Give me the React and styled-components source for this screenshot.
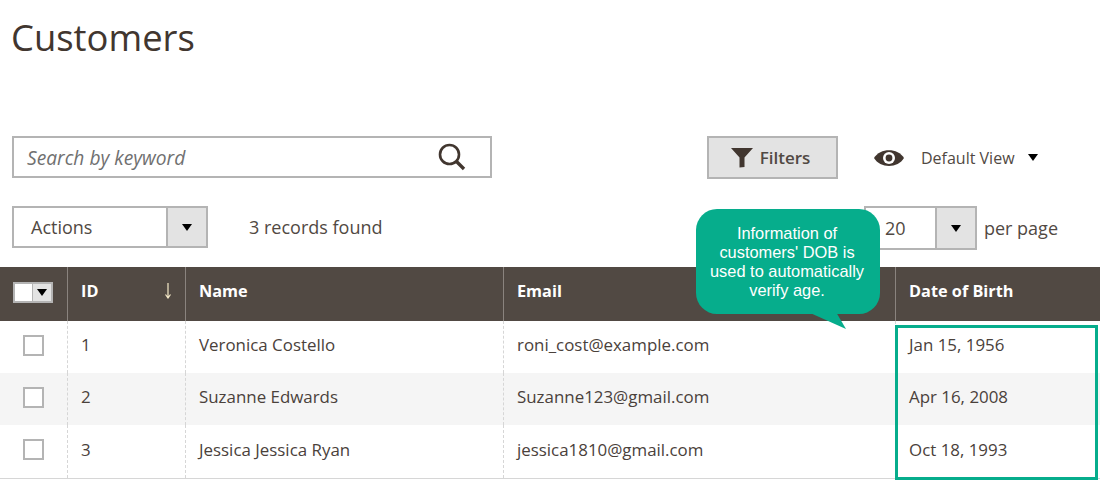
import React from 'react';
import styled, { createGlobalStyle } from 'styled-components';

const GlobalStyle = createGlobalStyle`
  html, body {
    margin: 0;
    padding: 0;
    background: #fff;
  }
  body {
    font-family: "Open Sans", "Noto Sans", sans-serif;
    color: #41362f;
    overflow: hidden;
  }
`;

const Page = styled.div`
  position: relative;
  width: 1100px;
  height: 489px;
  overflow: hidden;
`;

const Title = styled.h1`
  margin: 0;
  padding: 14px 0 0 11px;
  height: 136px;
  box-sizing: border-box;
  font-size: 36.4px;
  line-height: 46px;
  font-weight: 400;
  color: #41362f;
`;

const Toolbar = styled.div`
  display: flex;
  align-items: flex-start;
  padding-left: 12px;
`;

const SearchBox = styled.div`
  width: 480px;
  height: 42px;
  box-sizing: border-box;
  border: 2px solid #b4b4b4;
  display: flex;
  align-items: center;
  justify-content: space-between;
  padding: 0 24px 0 13px;
  font-size: 19.2px;
  font-style: italic;
  color: #707070;
`;

const FilterButton = styled.div`
  margin-left: 215px;
  width: 131px;
  height: 43px;
  box-sizing: border-box;
  border: 2px solid #b4b4b4;
  background: #e3e3e3;
  display: flex;
  align-items: center;
  justify-content: center;
  gap: 7px;
  padding-right: 4px;
  font-size: 17px;
  font-weight: 600;
  color: #514943;
`;

const ViewSwitch = styled.div`
  margin-left: 36px;
  height: 43px;
  display: flex;
  align-items: center;
  font-size: 16px;
  color: #514943;
`;

const ViewLabel = styled.span`
  margin: 0 13px 0 17px;
`;

const ActionsRow = styled(Toolbar)`
  margin-top: 27px;
  height: 44px;
`;

const Select = styled.div`
  width: ${(p) => p.$width}px;
  height: ${(p) => p.$height}px;
  box-sizing: border-box;
  border: 2px solid #b4b4b4;
  display: flex;
  align-items: stretch;
  font-size: 18px;
  color: #514943;
`;

const SelectValue = styled.div`
  flex: 1;
  display: flex;
  align-items: center;
  padding-left: ${(p) => p.$indent}px;
  border-right: 2px solid #b4b4b4;
`;

const SelectArrow = styled.div`
  width: 38px;
  background: #e3e3e3;
  display: flex;
  align-items: center;
  justify-content: center;
`;

const Caret = styled.span`
  display: block;
  width: 0;
  height: 0;
  border-left: 5.5px solid transparent;
  border-right: 5.5px solid transparent;
  border-top: 7px solid #000;
`;

const Records = styled.div`
  margin-left: 41px;
  height: 42px;
  display: flex;
  align-items: center;
  font-size: 18px;
  color: #514943;
`;

const PerPage = styled.div`
  margin-left: auto;
  margin-right: 42px;
  display: flex;
  align-items: center;
  gap: 7px;
  font-size: 18px;
  color: #514943;
`;

const Table = styled.div`
  margin-top: 17px;
  display: grid;
  grid-template-columns: 67px 118px 318px 392px 205px;
  border-bottom: 1px solid #d6d6d6;
`;

const HeadCell = styled.div`
  height: 54px;
  box-sizing: border-box;
  background: #514943;
  border-left: 1px solid ${(p) => (p.$first ? '#514943' : '#8a837e')};
  padding: 0 12px 6px 13px;
  display: flex;
  align-items: center;
  justify-content: space-between;
  font-size: 16.3px;
  font-weight: 700;
  color: #fff;
`;

const Cell = styled.div`
  height: ${(p) => (p.$tall ? 53 : 52)}px;
  box-sizing: border-box;
  background: ${(p) => (p.$shaded ? '#f5f5f5' : '#fff')};
  border-left: ${(p) => (p.$first ? 'none' : '1px dashed #d6d6d6')};
  padding: 0 13px ${(p) => (p.$tall ? 5 : 6)}px;
  display: flex;
  align-items: center;
  font-size: 16.9px;
  color: #4a413b;
`;

const CheckCell = styled(Cell)`
  justify-content: center;
  padding: 0 0 4px;
`;

const Checkbox = styled.span`
  display: block;
  width: 21px;
  height: 21px;
  box-sizing: border-box;
  border: 2px solid #b4b4b4;
  background: #fff;
`;

const MassSelect = styled.div`
  width: 40px;
  height: 21px;
  margin: 2px 0 0 -1px;
  box-sizing: border-box;
  border: 2px solid #b4b4b4;
  display: flex;
  flex-shrink: 0;
`;

const MassBox = styled.span`
  flex: 1;
  background: #fff;
`;

const MassArrow = styled.span`
  width: 18px;
  background: #e3e3e3;
  border-left: 1px solid #b4b4b4;
  display: flex;
  align-items: center;
  justify-content: center;
`;

const Highlight = styled.div`
  position: absolute;
  left: 895px;
  top: 325px;
  width: 203px;
  height: 155px;
  box-sizing: border-box;
  border: 3px solid #06ad8c;
`;

const Callout = styled.div`
  position: absolute;
  left: 696px;
  top: 209px;
  width: 184px;
  height: 105px;
  box-sizing: border-box;
  padding: 15px 2px 0 0;
  border-radius: 21px;
  background: #06ad8c;
  color: #fff;
  font-family: "Liberation Sans", Arial, sans-serif;
  font-size: 16.4px;
  line-height: 19px;
  text-align: center;
`;

const CalloutTail = styled.svg`
  position: absolute;
  left: 112px;
  top: 103px;
`;

const SearchIcon = () => (
  <svg width="28" height="28" viewBox="0 0 28 28" fill="none" stroke="#41362f">
    <circle cx="11.5" cy="11.5" r="9.5" strokeWidth="2.6" />
    <path d="M18.5 18.5 L26 26" strokeWidth="3.4" />
  </svg>
);

const FunnelIcon = () => (
  <svg width="22" height="20" viewBox="0 0 22 20" fill="#41362f">
    <path d="M0 0 H22 L13.5 9.5 V19 L8.5 19.5 V9.5 Z" />
  </svg>
);

const EyeIcon = () => (
  <svg width="30" height="18" viewBox="0 0 30 18">
    <path d="M0 9 C6 -1.5 24 -1.5 30 9 C24 19.5 6 19.5 0 9 Z" fill="#41362f" />
    <circle cx="15" cy="9" r="6" fill="#fff" />
    <circle cx="15" cy="9" r="3.4" fill="#41362f" />
  </svg>
);

const SortArrow = () => (
  <svg width="10" height="16" viewBox="0 0 10 16" fill="none" stroke="#f5e9c8" strokeWidth="1.2">
    <path d="M5 0 V14 M2.5 11.5 L5 15 L7.5 11.5" />
  </svg>
);

const customers = [
  { id: 1, name: 'Veronica Costello', email: 'roni_cost@example.com', dob: 'Jan 15, 1956' },
  { id: 2, name: 'Suzanne Edwards', email: 'Suzanne123@gmail.com', dob: 'Apr 16, 2008' },
  { id: 3, name: 'Jessica Jessica Ryan', email: 'jessica1810@gmail.com', dob: 'Oct 18, 1993' },
];

const App = () => (
  <Page>
    <GlobalStyle />
    <Title>Customers</Title>

    <Toolbar>
      <SearchBox>
        Search by keyword
        <SearchIcon />
      </SearchBox>
      <FilterButton>
        <FunnelIcon />
        Filters
      </FilterButton>
      <ViewSwitch>
        <EyeIcon />
        <ViewLabel>Default View</ViewLabel>
        <Caret />
      </ViewSwitch>
    </Toolbar>

    <ActionsRow>
      <Select $width={196} $height={42}>
        <SelectValue $indent={17}>Actions</SelectValue>
        <SelectArrow>
          <Caret />
        </SelectArrow>
      </Select>
      <Records>3 records found</Records>
      <PerPage>
        <Select $width={113} $height={44}>
          <SelectValue $indent={19}>20</SelectValue>
          <SelectArrow>
            <Caret />
          </SelectArrow>
        </Select>
        per page
      </PerPage>
    </ActionsRow>

    <Table>
      <HeadCell $first>
        <MassSelect>
          <MassBox />
          <MassArrow>
            <Caret />
          </MassArrow>
        </MassSelect>
      </HeadCell>
      <HeadCell>
        ID
        <SortArrow />
      </HeadCell>
      <HeadCell>Name</HeadCell>
      <HeadCell>Email</HeadCell>
      <HeadCell>Date of Birth</HeadCell>

      {customers.map((c, i) => {
        const shaded = i === 1;
        const tall = i === 2;
        return (
          <React.Fragment key={c.id}>
            <CheckCell $first $shaded={shaded} $tall={tall}>
              <Checkbox />
            </CheckCell>
            <Cell $shaded={shaded} $tall={tall}>{c.id}</Cell>
            <Cell $shaded={shaded} $tall={tall}>{c.name}</Cell>
            <Cell $shaded={shaded} $tall={tall}>{c.email}</Cell>
            <Cell $shaded={shaded} $tall={tall}>{c.dob}</Cell>
          </React.Fragment>
        );
      })}
    </Table>

    <Highlight />
    <Callout>
      Information of
      <br />
      customers' DOB is
      <br />
      used to automatically
      <br />
      verify age.
      <CalloutTail width="40" height="20" viewBox="0 0 40 20" fill="#06ad8c">
        <path d="M0 0 H28 L38 17 Z" />
      </CalloutTail>
    </Callout>
  </Page>
);

export default App;
